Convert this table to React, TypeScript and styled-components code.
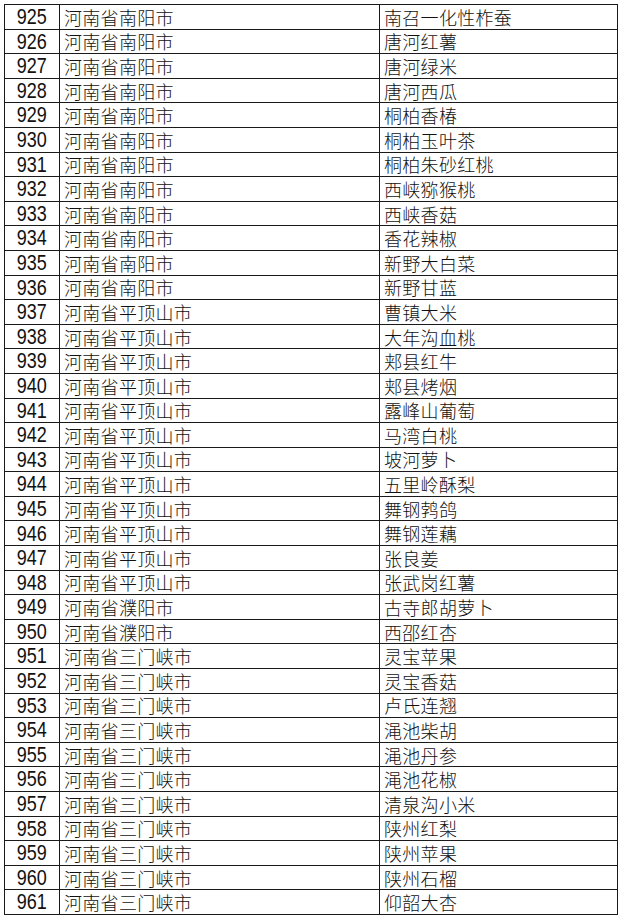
import React from "react";
import styled, { createGlobalStyle } from "styled-components";

const Global = createGlobalStyle`
  html, body { margin: 0; padding: 0; background: #fff; }
  body { width: 622px; height: 920px; overflow: hidden; }
`;

const rows: [number, string, string][] = [
  [925, "河南省南阳市", "南召一化性柞蚕"],
  [926, "河南省南阳市", "唐河红薯"],
  [927, "河南省南阳市", "唐河绿米"],
  [928, "河南省南阳市", "唐河西瓜"],
  [929, "河南省南阳市", "桐柏香椿"],
  [930, "河南省南阳市", "桐柏玉叶茶"],
  [931, "河南省南阳市", "桐柏朱砂红桃"],
  [932, "河南省南阳市", "西峡猕猴桃"],
  [933, "河南省南阳市", "西峡香菇"],
  [934, "河南省南阳市", "香花辣椒"],
  [935, "河南省南阳市", "新野大白菜"],
  [936, "河南省南阳市", "新野甘蓝"],
  [937, "河南省平顶山市", "曹镇大米"],
  [938, "河南省平顶山市", "大年沟血桃"],
  [939, "河南省平顶山市", "郏县红牛"],
  [940, "河南省平顶山市", "郏县烤烟"],
  [941, "河南省平顶山市", "露峰山葡萄"],
  [942, "河南省平顶山市", "马湾白桃"],
  [943, "河南省平顶山市", "坡河萝卜"],
  [944, "河南省平顶山市", "五里岭酥梨"],
  [945, "河南省平顶山市", "舞钢鹁鸽"],
  [946, "河南省平顶山市", "舞钢莲藕"],
  [947, "河南省平顶山市", "张良姜"],
  [948, "河南省平顶山市", "张武岗红薯"],
  [949, "河南省濮阳市", "古寺郎胡萝卜"],
  [950, "河南省濮阳市", "西邵红杏"],
  [951, "河南省三门峡市", "灵宝苹果"],
  [952, "河南省三门峡市", "灵宝香菇"],
  [953, "河南省三门峡市", "卢氏连翘"],
  [954, "河南省三门峡市", "渑池柴胡"],
  [955, "河南省三门峡市", "渑池丹参"],
  [956, "河南省三门峡市", "渑池花椒"],
  [957, "河南省三门峡市", "清泉沟小米"],
  [958, "河南省三门峡市", "陕州红梨"],
  [959, "河南省三门峡市", "陕州苹果"],
  [960, "河南省三门峡市", "陕州石榴"],
  [961, "河南省三门峡市", "仰韶大杏"],
];

const Page = styled.div`
  padding: 4px 5px 0 4px;
`;

const Table = styled.div`
  display: grid;
  grid-template-columns: 55px 320px 238px;
  grid-auto-rows: 24.6px;
  border-top: 1px solid #1a1a1a;
  border-left: 1px solid #1a1a1a;
  width: 613px;
`;

const Cell = styled.div<{ $num?: boolean }>`
  border-right: 1px solid #1a1a1a;
  border-bottom: 1px solid #1a1a1a;
  display: flex;
  align-items: center;
  justify-content: ${(p) => (p.$num ? "center" : "flex-start")};
  padding-left: ${(p) => (p.$num ? "0" : "4px")};
  font-family: "Noto Sans CJK SC", sans-serif;
  font-size: 18px;
  font-weight: 300;
  letter-spacing: 0.3px;
  color: #111;
  line-height: 1;
  white-space: nowrap;
  overflow: hidden;
`;

const Num = styled.span`
  display: inline-block;
  font-family: "Liberation Sans", Arial, sans-serif;
  font-size: 22.5px;
  font-weight: 400;
  letter-spacing: 0;
  transform: scaleX(0.8);
  margin-top: 1px;
`;

export default function App() {
  return (
    <>
      <Global />
      <Page>
        <Table>
          {rows.map(([n, a, b]) => (
            <React.Fragment key={n}>
              <Cell $num>
                <Num>{n}</Num>
              </Cell>
              <Cell>{a}</Cell>
              <Cell>{b}</Cell>
            </React.Fragment>
          ))}
        </Table>
      </Page>
    </>
  );
}
